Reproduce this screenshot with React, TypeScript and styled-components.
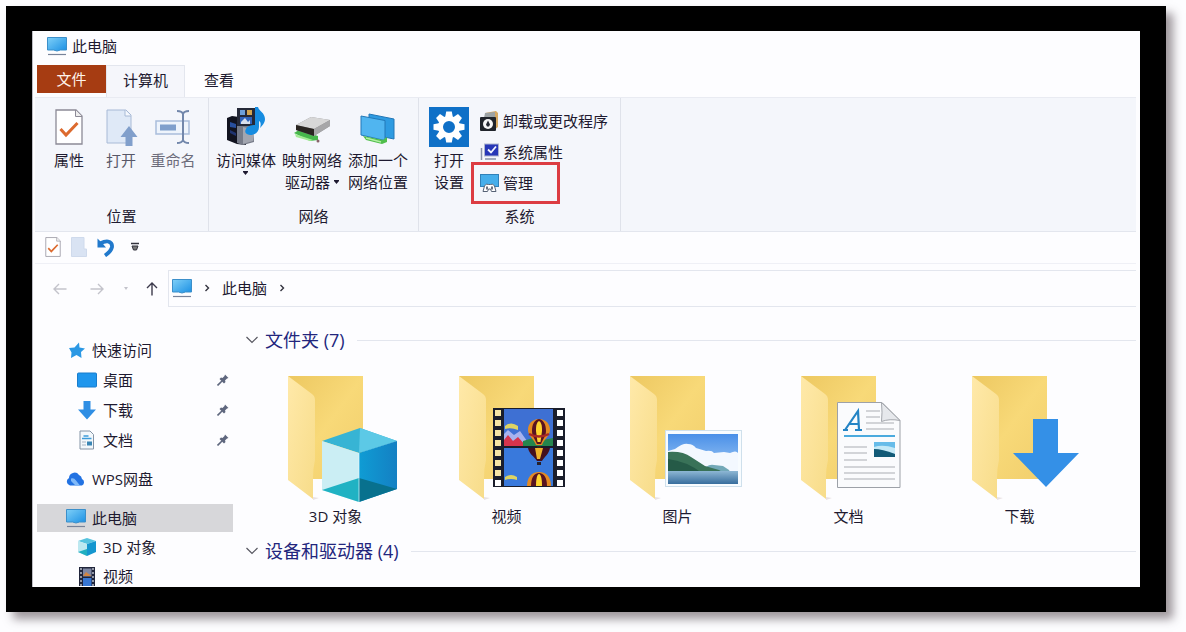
import React from 'react';
import styled, { createGlobalStyle } from 'styled-components';

const ink = '#1e1a30';
const line = '#e3e6ee';

const GlobalStyle = createGlobalStyle`
  *, *::before, *::after { box-sizing: border-box; }
  body {
    margin: 0;
    background: #fdfdff;
    color: ${ink};
    font-family: "Open Sans", "Noto Sans CJK SC", sans-serif;
    font-size: 15px;
    line-height: 22px;
    overflow: hidden;
  }
  button {
    font: inherit;
    color: inherit;
    background: none;
    border: 0;
    padding: 0;
    cursor: pointer;
    white-space: nowrap;
  }
  svg { display: block; flex: none; }
  h1, h2, ul { margin: 0; padding: 0; list-style: none; font-weight: 400; }
`;

const Page = styled.div`
  height: 100vh;
  padding: 6px 20px 20px 6px;
`;

const Frame = styled.div`
  display: flex;
  height: 100%;
  padding: 25px 26px;
  background: #000;
  box-shadow: 7px 7px 9px rgba(62, 48, 56, 0.5);
`;

const Window = styled.div`
  flex: 1;
  min-width: 0;
  display: flex;
  flex-direction: column;
  overflow: hidden;
  padding: 0 4px 0 2px;
  background: #fdfdff;
  border-left: 1px solid #bdbdc4;
`;

const TitleBar = styled.header`
  display: flex;
  align-items: center;
  gap: 5px;
  height: 34px;
  flex: none;
  padding: 0 12px 4px;
`;

const Title = styled.h1`
  font-size: 15px;
`;

const TabBar = styled.div`
  display: flex;
  align-items: stretch;
  height: 32px;
  flex: none;
  padding-left: 2px;
`;

const FileTab = styled.button`
  width: 69px;
  height: 28px;
  background: #a63c12;
  color: #fff3ea;
`;

const Tab = styled.button<{ $active?: boolean }>`
  width: ${p => (p.$active ? 79 : 68)}px;
  padding-bottom: 4px;
  border: 1px solid ${p => (p.$active ? line : 'transparent')};
  border-bottom: 0;
  background: ${p => (p.$active ? '#f5f6fb' : 'transparent')};
`;

const Ribbon = styled.div`
  display: flex;
  flex: none;
  height: 135px;
  background: #f4f6fb;
  border-top: 1px solid #e9ebf2;
  border-bottom: 1px solid ${line};
`;

const RibbonGroup = styled.section<{ $inset: number; $width: number }>`
  display: flex;
  flex-direction: column;
  justify-content: space-between;
  width: ${p => p.$width}px;
  padding: 9px 0 4px;
  border-right: 1px solid #dfe2ea;
  & > div { padding-left: ${p => p.$inset}px; }
`;

const Tools = styled.div`
  display: flex;
  align-items: flex-start;
`;

const GroupCaption = styled.span`
  text-align: center;
`;

const Tool = styled.button<{ $width: number; $tone?: string }>`
  display: flex;
  flex-direction: column;
  align-items: center;
  gap: 2px;
  width: ${p => p.$width}px;
  color: ${p => p.$tone ?? ink};
`;

const ToolIcon = styled.span`
  display: flex;
  align-items: center;
  justify-content: center;
  height: 40px;
`;

const ToolLabel = styled.span`
  display: flex;
  flex-direction: column;
  align-items: center;
`;

const WithCaret = styled.span`
  display: flex;
  align-items: center;
  gap: 4px;
`;

const CommandList = styled.div`
  display: flex;
  flex-direction: column;
  align-items: flex-start;
  gap: 3px;
  padding-left: 5px;
`;

const Command = styled.button<{ $marked?: boolean }>`
  position: relative;
  display: flex;
  align-items: center;
  gap: 4px;
  height: 28px;
  text-align: left;
  &::after {
    content: "";
    display: ${p => (p.$marked ? 'block' : 'none')};
    position: absolute;
    inset: -7px -27px -7px -9px;
    border: 3px solid #dc3c42;
  }
`;

const QuickBar = styled.div`
  display: flex;
  align-items: center;
  gap: 10px;
  flex: none;
  height: 32px;
  padding: 0 0 2px 10px;
  border-bottom: 1px solid #eff0f6;
  & > :last-child { margin-left: 6px; }
`;

const AddressRow = styled.nav`
  display: flex;
  align-items: center;
  flex: none;
  height: 50px;
  padding: 0 0 1px 18px;
`;

const NavButton = styled.button<{ $gap: number }>`
  margin-right: ${p => p.$gap}px;
`;

const AddressBox = styled.div`
  display: flex;
  align-items: center;
  gap: 12px;
  flex: 1;
  height: 37px;
  padding: 0 0 2px 3px;
  border: 1px solid ${line};
  border-right: 0;
`;

const Content = styled.div`
  display: flex;
  flex: 1;
  min-height: 0;
`;

const Sidebar = styled.nav`
  display: flex;
  flex-direction: column;
  gap: 11px;
  flex: none;
  width: 198px;
  padding: 22px 0 0 2px;
`;

const SideList = styled.ul`
  display: flex;
  flex-direction: column;
  gap: 2px;
  &:last-child { gap: 1px; }
`;

const SideLink = styled.a<{ $nested?: boolean; $selected?: boolean }>`
  display: flex;
  align-items: center;
  gap: 6px;
  height: 28px;
  padding: 0 4px 0 ${p => (p.$nested ? 40 : 29)}px;
  color: inherit;
  text-decoration: none;
  background: ${p => (p.$selected ? '#d7d7da' : 'transparent')};
`;

const SideText = styled.span`
  flex: 1;
  white-space: nowrap;
`;

const Main = styled.main`
  flex: 1;
  min-width: 0;
  padding: 14px 0 0 13px;
`;

const SectionHead = styled.h2`
  display: flex;
  align-items: center;
  gap: 12px;
  font-size: 18px;
  line-height: 24px;
  color: #23267d;
  &::after { content: ""; flex: 1; height: 1px; background: ${line}; }
`;

const Toggle = styled.button`
  display: flex;
  align-items: center;
  gap: 7px;
`;

const FolderGrid = styled.ul`
  display: grid;
  grid-template-columns: repeat(auto-fill, 171px);
  padding: 23px 0 12px 4px;
`;

const FolderLink = styled.a`
  display: flex;
  flex-direction: column;
  align-items: center;
  height: 152px;
  gap: 2px;
  color: inherit;
  text-decoration: none;
`;

const Monitor = () => (
  <svg width="20" height="20" viewBox="0 0 20 20">
    <defs>
      <linearGradient id="screen" x1="0" y1="0" x2="1" y2="1">
        <stop offset="0" stopColor="#7fd0f8" />
        <stop offset="1" stopColor="#1a8fe3" />
      </linearGradient>
    </defs>
    <path d="M0.500 1.500h19v12.500h-6l-3.500 1-3.500-1h-6z" fill="url(#screen)" stroke="#3b8fca" />
    <path d="M1 18.500h18" stroke="#77839a" strokeWidth="1.200" />
  </svg>
);

const PropertiesIcon = ({ w = 28, h = 36 }: { w?: number; h?: number }) => (
  <svg width={w} height={h} viewBox="0 0 28 36">
    <path d="M1 1h20l6 6v28H1z" fill="#fff" stroke="#8c8a96" strokeWidth="1.300" />
    <path d="M20.500 1v6.500H27" fill="#eee" stroke="#8c8a96" />
    <path d="M5.500 20l5.500 6L22.500 14" fill="none" stroke="#dc6a2e" strokeWidth="3" />
  </svg>
);

const OpenIcon = () => (
  <svg width="34" height="38" viewBox="0 0 34 38">
    <path d="M3 2h19l5 5v28H3z" fill="#dfe9f7" stroke="#a8bad6" />
    <path d="M21 2v6h6" fill="#f5f8fd" stroke="#a8bad6" />
    <path d="M25 18l8.500 11H28.500v9h-7v-9H16.500z" fill="#819fcb" />
  </svg>
);

const RenameIcon = () => (
  <svg width="36" height="36" viewBox="0 0 36 36">
    <rect x="1" y="12" width="33" height="13" fill="#eef4fc" stroke="#a9bddb" strokeWidth="1.500" />
    <rect x="5" y="15.500" width="16" height="6" fill="#7f9fcc" />
    <path d="M22 2q5 0 6 3 1-3 6-3M28 4v28M22 34q5 0 6-3 1 3 6 3" fill="none" stroke="#7287ab" strokeWidth="2" />
  </svg>
);

const MediaIcon = () => (
  <svg width="40" height="40" viewBox="0 0 40 40">
    <path d="M1 11l5-2 14 2v27l-9-1-10-4z" fill="#11131f" />
    <path d="M4 15l6 2v4l-6-1z" fill="#284f9d" /><path d="M4 23l6 3v3l-6-3z" fill="#1f3470" />
    <path d="M11 17l16 2 1 16-11 3-6-2z" fill="#767b88" />
    <path d="M17 20l10 2v12l-10 3z" fill="#a2a6b0" />
    <path d="M11 1h18v18H11z" fill="#252938" />
    <path d="M14 3h5v5h-5z" fill="#6d9fd9" /><path d="M21 3h5v5h-5z" fill="#d2a450" />
    <path d="M14 10h12v7H14z" fill="#2f62b9" /><path d="M15 15l4-4 3 4 2-2v4h-9z" fill="#d7dfec" />
    <path d="M29 0h3c1 4 7 6 7 12 0 4-3 7-5 9 1-3 1-6-1-7v6c0 5-4 8-9 8-4 0-6-3-4-6 1-3 5-4 9-4z" fill="#168ce0" />
  </svg>
);

const DriveIcon = () => (
  <svg width="38" height="34" viewBox="0 0 38 34">
    <path d="M1 23l5-3 19 6v4l-8 1z" fill="#46b74b" />
    <path d="M2 24l18 6-3 1-14-4z" fill="#a2eb94" />
    <path d="M3 15L18 7l19 3v6L21 26 3 20z" fill="#8e8e90" />
    <path d="M3 15L18 7l19 3-16 9z" fill="#d7d7d7" />
    <path d="M3 15l18 4v7L3 20z" fill="#292521" />
    <path d="M21 19l16-9v6L21 26z" fill="#a6a6a8" />
    <circle cx="25" cy="31" r="1.500" fill="#89636a" />
  </svg>
);

const NetPlaceIcon = () => (
  <svg width="36" height="36" viewBox="0 0 36 36">
    <path d="M9 5l25 5v20l-25-5z" fill="#2e9be1" stroke="#2277b6" />
    <path d="M1 7l24 4.500v20L1 26z" fill="#50b5f0" stroke="#2379b8" />
    <path d="M3 27l20 4 4-3v5l-5 2-16-4z" fill="#4fbe4b" />
    <path d="M6 29l15 4" stroke="#b2efa3" strokeWidth="1.500" />
  </svg>
);

const SettingsIcon = () => (
  <svg width="40" height="40" viewBox="0 0 40 40">
    <rect width="40" height="40" fill="#0f70c7" />
    <g transform="translate(20 20)" fill="#fff">
      {[0, 45, 90, 135, 180, 225, 270, 315].map(a => (
        <path key={a} d="M-4-9L-2.800-15.500H2.800L4-9z" transform={`rotate(${a})`} />
      ))}
      <circle r="8.500" fill="none" stroke="#fff" strokeWidth="5" />
    </g>
  </svg>
);

const UninstallIcon = () => (
  <svg width="19" height="20" viewBox="0 0 19 20">
    <path d="M5 2l11-2 2 2v14l-4 3z" fill="#d6a862" />
    <path d="M5 2l10-1v6H4z" fill="#9da3a5" />
    <rect x="0" y="6" width="16" height="14" rx="1" fill="#20242b" />
    <circle cx="8" cy="13" r="5" fill="#f7f7f8" />
    <path d="M8 9.500l2 4-1 2H7l-1-2z" fill="#242832" />
  </svg>
);

const SysPropsIcon = () => (
  <svg width="19" height="18" viewBox="0 0 19 18">
    <path d="M1.500 5v12" fill="none" stroke="#8892a8" strokeWidth="1.500" />
    <rect x="4.500" y="1" width="14" height="12" fill="#2737b7" stroke="#aeb5cf" />
    <path d="M8 6.500l3 3 5-6" fill="none" stroke="#f4f6ff" strokeWidth="1.800" />
    <path d="M5 16h11" stroke="#a3abbd" strokeWidth="2" />
  </svg>
);

const ManageIcon = () => (
  <svg width="19" height="20" viewBox="0 0 19 20">
    <rect x="0.500" y="1.500" width="18" height="12" fill="#46aeea" stroke="#3181b8" />
    <path d="M3 18.500l1.500-5.500q1.500-3 4-1.500h2q2.500-1.500 4 1.500L16 18.500h-4.500L10.500 16h-2l-1 2.500z" fill="#fff" stroke="#566275" />
    <path d="M7 13.500v3M12 13.500v3" stroke="#3b4659" strokeWidth="1.500" />
  </svg>
);

const BlankDoc = () => (
  <svg width="16" height="20" viewBox="0 0 16 20">
    <path d="M0.500 0.500h12.500V12H15.500v7.500h-15z" fill="#d9e3f3" stroke="#cfdaec" />
  </svg>
);

const UndoIcon = () => (
  <svg width="18" height="20" viewBox="0 0 18 20">
    <path d="M3 6.500Q8 4 11 4.500 15.500 5.500 15 10 14 14.500 8 18.500" fill="none" stroke="#2179cc" strokeWidth="3.800" />
    <path d="M0.500 1.500v9H9L6 7z" fill="#2179cc" />
  </svg>
);

const MenuCaret = () => (
  <svg width="8" height="10" viewBox="0 0 8 10">
    <path d="M0 1.500h8" stroke="#33333d" strokeWidth="1.500" />
    <path d="M1 4h6L5.500 8h-3z" fill="#777" stroke="#33333d" />
  </svg>
);

const SmallCaret = () => (
  <svg width="5" height="4" viewBox="0 0 5 4"><path d="M0 0h5v1L2.500 4 0 1z" fill={ink} /></svg>
);

const Arrow = ({ angle, color }: { angle: number; color: string }) => (
  <svg width="14" height="14" viewBox="0 0 14 14">
    <path d="M13.500 7H1M6 2L1 7l5 5" fill="none" stroke={color} strokeWidth="1.400" transform={`rotate(${angle} 7 7)`} />
  </svg>
);

const Crumb = () => (
  <svg width="6" height="8" viewBox="0 0 6 8"><path d="M1.500 1l3 3-3 3" fill="none" stroke="#33333f" strokeWidth="1.400" /></svg>
);

const Chevron = () => (
  <svg width="12" height="8" viewBox="0 0 12 8"><path d="M0.500 1L6 6.500 11.500 1" fill="none" stroke="#55555f" strokeWidth="1.200" /></svg>
);

const StarIcon = () => (
  <svg width="20" height="20" viewBox="0 0 20 20">
    <path d="M13 2.500l.5 5 5.500 1-4 3.500.5 6-5-3-5.500 3 .5-5.500-2.500-4.500 5.500-.5z" fill="#2b98e4" />
  </svg>
);

const DesktopIcon = () => (
  <svg width="20" height="16" viewBox="0 0 20 16">
    <rect x="0.500" y="1" width="19" height="14" rx="1" fill="#1f96ed" stroke="#197dcc" />
  </svg>
);

const DownIcon = () => (
  <svg width="20" height="20" viewBox="0 0 20 20"><path d="M6.500 1h7v8.500H19L10 19.500 1 9.500h5.500z" fill="#2f8ee4" /></svg>
);

const DocIcon = () => (
  <svg width="20" height="20" viewBox="0 0 20 20">
    <path d="M3 1h10l3.500 3.500V19H3z" fill="#f3f8fc" stroke="#8594a6" />
    <path d="M5 8.500h9.500M6.500 6h5" stroke="#3d9bd9" strokeWidth="1.500" />
    <path d="M5 12h4M5 15h4" stroke="#a9b5c4" /><rect x="10" y="11.500" width="5" height="4" fill="#3a86b5" />
  </svg>
);

const CloudIcon = () => (
  <svg width="20" height="16" viewBox="0 0 20 16">
    <path d="M4 14.500a4 4 0 0 1-1-7.500 5.500 5.500 0 0 1 10-3 5 5 0 0 1 3 4 3.600 3.600 0 0 1 0 6.500z" fill="#2272e2" />
    <path d="M5 7.500q3-1 5 2l4 5H9.500L5 10z" fill="#80b9f8" />
  </svg>
);

const CubeIcon = () => (
  <svg width="20" height="20" viewBox="0 0 20 20">
    <path d="M1 4l9-3 9 3-9 3z" fill="#56c3df" /><path d="M1 4l9 3v12l-9-4z" fill="#bde8f0" />
    <path d="M19 4l-9 3v12l9-4z" fill="#1496cf" /><path d="M1 15l9-3v7z" fill="#20afc1" />
  </svg>
);

const FilmIcon = () => (
  <svg width="20" height="20" viewBox="0 0 20 20">
    <rect x="2" y="1" width="16" height="19" fill="#20253b" />
    <rect x="6" y="2.500" width="8.500" height="8" fill="#7e87a4" /><rect x="6" y="12" width="8.500" height="8" fill="#3777d4" />
    <path d="M6 10l3-4 5.500 4z" fill="#d28542" />
    <path d="M4 2v18M16 2v18" stroke="#b7bdc9" strokeWidth="1.500" strokeDasharray="2 2" />
  </svg>
);

const PinIcon = () => (
  <svg width="12" height="12" viewBox="0 0 12 12">
    <path d="M8 0.500l3.500 3.500-1.500 .5L8 6.500l.5 1.500-1.500 1.500-4.500-4.500L4 3.500l1.500.5L7.500 2z" fill="#5f677e" />
    <path d="M5 7L.5 11.500" stroke="#5f677e" strokeWidth="1.600" />
  </svg>
);

const Balloon = ({ x, y }: { x: number; y: number }) => (
  <g transform={`translate(${x} ${y})`}>
    <path d="M0 0c7 0 11 5 11 11 0 6-6 9-8 15h-6c-2-6-8-9-8-15C-11 5-7 0 0 0z" fill="#e48a22" />
    <path d="M0 0c5 1 7 6 7 12 0 5-3 8-5 13h-4c-2-5-5-8-5-13 0-6 2-11 7-12z" fill="#5a1421" />
    <path d="M0 2c3 2 3 6 3 10L1.500 23h-3L-3 12c0-4 0-8 3-10z" fill="#ffd52f" />
    <path d="M-10 15q10 5 20 0" stroke="#a82823" strokeWidth="2.500" fill="none" />
    <path d="M-2 27h4v3h-4z" fill="#39201c" />
  </g>
);

const overlays: Record<string, React.ReactNode> = {
  cube: (
    <g>
      <path d="M50 66l38-13 37 13-38 12z" fill="#37b4d4" />
      <path d="M88 53l37 13-38 12z" fill="#5cc9e6" />
      <path d="M50 66l37 12v49L50 115z" fill="#cbeef4" />
      <path d="M125 66L87 78v49l38-13z" fill="url(#cubeSide)" />
      <path d="M50 115l37-12v24z" fill="#20b2c3" />
      <path d="M87 103l38 11-38 13z" fill="#08718e" />
      <path d="M87 78v49" stroke="#e4fbff" strokeWidth="1" opacity=".7" />
    </g>
  ),
  film: (
    <g>
      <rect x="50" y="33" width="72" height="79" fill="#1a1d2b" />
      <rect x="61" y="34" width="49" height="37" fill="#3e70d3" />
      <rect x="61" y="73" width="49" height="38" fill="#3979dc" />
      <path d="M62 51q6-5 13 0v4q-7-3-13-1zM62 102q6-4 12 0v3q-6-2-12 0z" fill="#ddd363" />
      <path d="M61 59l4-4 6 5 6-4 7 10v5H61z" fill="#a7b3ee" />
      <path d="M61 65l4-5 5 6 5-4 8 9H61z" fill="#d6344c" />
      <path d="M80 71V66l10-3 10 2 10-2v8z" fill="#25864d" />
      <Balloon x={96} y={44} />
      <path d="M85 73h22c-1 6-5 8-8 13h-5c-3-5-8-7-9-13z" fill="#45101c" />
      <path d="M92 73h8l-3 11h-3z" fill="#efb42b" />
      <path d="M94 87h4v3h-4z" fill="#27202a" />
      <path d="M84 111c0-8 4-14 12-14s12 6 12 14z" fill="#e48a22" />
      <path d="M88 111c0-8 3-13 8-13s8 5 8 13z" fill="#5a1421" />
      <path d="M93 111c0-7 1-12 3-12s3 5 3 12z" fill="#ffd52f" />
      {[0, 1, 2, 3, 4, 5, 6, 7].map(i => (
        <g key={i}>
          <rect x="52" y={35 + i * 10} width="6" height="6" fill={i < 7 ? '#f5e4a6' : '#fff'} />
          <rect x="114" y={35 + i * 10} width="6" height="6" fill="#fff" />
        </g>
      ))}
    </g>
  ),
  photo: (
    <g>
      <rect x="51.500" y="55.500" width="76" height="56" fill="#f8fcff" stroke="#cfe0ec" />
      <rect x="54" y="59" width="70" height="50" fill="url(#sky)" />
      <path d="M54 76l7-2q8-6 13-5 5 0 8 4l10 3q6-1 8 2l10-1 6 1q6-3 8 0v22H54z" fill="#f3f8ff" />
      <path d="M92 92q4-3 8-2l9 1 6 4 1 2H88z" fill="#72a8b8" />
      <path d="M54 77q15-1 23 5l14 9 14 4 5 3H54z" fill="#397258" />
      <path d="M54 84q18 2 34 14H54z" fill="#255a47" />
      <rect x="54" y="96" width="70" height="13" fill="url(#lake)" />
    </g>
  ),
  document: (
    <g transform="translate(6 -1)">
      <path d="M46.500 28.500H91l18 18v67H46.500z" fill="#fafbfd" stroke="#9da1a8" />
      <path d="M90.500 28.500q1 10 0 19 8-3 18.500-1z" fill="#e6e8ec" stroke="#a4a7ad" />
      <path d="M54 56L67 37l1 19M58 50h9M52 56h5M64 56h7" fill="none" stroke="#2484c5" strokeWidth="2.200" />
      <path d="M75 37h14M75 43h14M75 49h28M75 55h28M53 73h23M53 79h23M53 86h23M53 93h51M53 99h51M53 105h51" stroke="#c5c7cb" strokeWidth="1.300" />
      <path d="M53 62h51" stroke="#4aaade" strokeWidth="2" />
      <rect x="83" y="68" width="21" height="15" fill="#67bce9" />
      <path d="M83 73q9-3 21 1v6q-12-3-21-3z" fill="#c4e9f7" />
      <path d="M83 75q8 0 21 5v3H83z" fill="#125a77" />
    </g>
  ),
  download: <path d="M77 44h25v34h21L90 112 57 78h20z" fill="#3490e7" />,
};

const FolderArt = ({ kind }: { kind: string }) => (
  <svg width="128" height="128" viewBox="0 0 128 128">
    <defs>
      <linearGradient id="back" x1="0" y1="0" x2="1" y2="1">
        <stop offset="0" stopColor="#edc861" /><stop offset=".5" stopColor="#f8d978" /><stop offset="1" stopColor="#f1ce6c" />
      </linearGradient>
      <linearGradient id="flap" x1="0" y1="0" x2="1" y2="1">
        <stop offset="0" stopColor="#ffe9a9" /><stop offset="1" stopColor="#f7dc89" />
      </linearGradient>
      <linearGradient id="cubeSide"><stop offset="0" stopColor="#0f9cd4" /><stop offset="1" stopColor="#1480c3" /></linearGradient>
      <linearGradient id="sky" x1="0" y1="0" x2="0" y2="1"><stop offset="0" stopColor="#4a90e8" /><stop offset="1" stopColor="#bddcf9" /></linearGradient>
      <linearGradient id="lake" x1="0" y1="0" x2="0" y2="1"><stop offset="0" stopColor="#8db7d4" /><stop offset="1" stopColor="#386d9d" /></linearGradient>
    </defs>
    <path d="M16 1h75v103H35z" fill="url(#back)" />
    <path d="M41 122l6 1-6 2z" fill="#e9e2e4" />
    <path d="M16 1l24 18q3 2 3 6v60q-2 8-2 18v21L16 105z" fill="url(#flap)" />
    {overlays[kind]}
  </svg>
);

const folders = [
  { name: '3D 对象', kind: 'cube' },
  { name: '视频', kind: 'film' },
  { name: '图片', kind: 'photo' },
  { name: '文档', kind: 'document' },
  { name: '下载', kind: 'download' },
];

interface SideItem { name: string; icon: React.ReactNode; nested?: boolean; pinned?: boolean; selected?: boolean }

const sideLists: SideItem[][] = [
  [
    { name: '快速访问', icon: <StarIcon /> },
    { name: '桌面', icon: <DesktopIcon />, nested: true, pinned: true },
    { name: '下载', icon: <DownIcon />, nested: true, pinned: true },
    { name: '文档', icon: <DocIcon />, nested: true, pinned: true },
  ],
  [{ name: 'WPS网盘', icon: <CloudIcon /> }],
  [
    { name: '此电脑', icon: <Monitor />, selected: true },
    { name: '3D 对象', icon: <CubeIcon />, nested: true },
    { name: '视频', icon: <FilmIcon />, nested: true },
  ],
];

export default function App() {
  return (
    <Page>
      <GlobalStyle />
      <Frame>
        <Window>
          <TitleBar><Monitor /><Title>此电脑</Title></TitleBar>
          <TabBar>
            <FileTab>文件</FileTab>
            <Tab $active>计算机</Tab>
            <Tab>查看</Tab>
          </TabBar>
          <Ribbon>
            <RibbonGroup $inset={8} $width={174}>
              <Tools>
                <Tool $width={52}><ToolIcon><PropertiesIcon /></ToolIcon><ToolLabel>属性</ToolLabel></Tool>
                <Tool $width={52} $tone="#585868"><ToolIcon><OpenIcon /></ToolIcon><ToolLabel>打开</ToolLabel></Tool>
                <Tool $width={52} $tone="#6c6c7a"><ToolIcon><RenameIcon /></ToolIcon><ToolLabel>重命名</ToolLabel></Tool>
              </Tools>
              <GroupCaption>位置</GroupCaption>
            </RibbonGroup>
            <RibbonGroup $inset={4} $width={210}>
              <Tools>
                <Tool $width={66}><ToolIcon><MediaIcon /></ToolIcon><ToolLabel>访问媒体<SmallCaret /></ToolLabel></Tool>
                <Tool $width={66}>
                  <ToolIcon><DriveIcon /></ToolIcon>
                  <ToolLabel><span>映射网络</span><WithCaret>驱动器<SmallCaret /></WithCaret></ToolLabel>
                </Tool>
                <Tool $width={66}>
                  <ToolIcon><NetPlaceIcon /></ToolIcon>
                  <ToolLabel><span>添加一个</span><span>网络位置</span></ToolLabel>
                </Tool>
              </Tools>
              <GroupCaption>网络</GroupCaption>
            </RibbonGroup>
            <RibbonGroup $inset={4} $width={202}>
              <Tools>
                <Tool $width={52}>
                  <ToolIcon><SettingsIcon /></ToolIcon>
                  <ToolLabel><span>打开</span><span>设置</span></ToolLabel>
                </Tool>
                <CommandList>
                  <Command><UninstallIcon />卸载或更改程序</Command>
                  <Command><SysPropsIcon />系统属性</Command>
                  <Command $marked><ManageIcon />管理</Command>
                </CommandList>
              </Tools>
              <GroupCaption>系统</GroupCaption>
            </RibbonGroup>
          </Ribbon>
          <QuickBar>
            <button aria-label="属性"><PropertiesIcon w={16} h={20} /></button>
            <button aria-label="新建文件夹"><BlankDoc /></button>
            <button aria-label="撤消"><UndoIcon /></button>
            <button aria-label="自定义快速访问工具栏"><MenuCaret /></button>
          </QuickBar>
          <AddressRow>
            <NavButton $gap={23} aria-label="后退"><Arrow angle={0} color="#c3c3cb" /></NavButton>
            <NavButton $gap={20} aria-label="前进"><Arrow angle={180} color="#c3c3cb" /></NavButton>
            <NavButton $gap={17} aria-label="最近浏览的位置">
              <svg width="4" height="3" viewBox="0 0 4 3"><path d="M0 0h4L2 3z" fill="#c3c3cb" /></svg>
            </NavButton>
            <NavButton $gap={9} aria-label="上移"><Arrow angle={90} color="#3c3a4c" /></NavButton>
            <AddressBox>
              <Monitor /><Crumb />
              <button>此电脑</button>
              <Crumb />
            </AddressBox>
          </AddressRow>
          <Content>
            <Sidebar>
              {sideLists.map((list, i) => (
                <SideList key={i}>
                  {list.map(item => (
                    <li key={item.name}>
                      <SideLink href="#" $nested={item.nested} $selected={item.selected}>
                        {item.icon}<SideText>{item.name}</SideText>{item.pinned && <PinIcon />}
                      </SideLink>
                    </li>
                  ))}
                </SideList>
              ))}
            </Sidebar>
            <Main>
              <SectionHead><Toggle><Chevron />文件夹 (7)</Toggle></SectionHead>
              <FolderGrid>
                {folders.map(f => (
                  <li key={f.name}>
                    <FolderLink href="#"><FolderArt kind={f.kind} />{f.name}</FolderLink>
                  </li>
                ))}
              </FolderGrid>
              <SectionHead><Toggle><Chevron />设备和驱动器 (4)</Toggle></SectionHead>
            </Main>
          </Content>
        </Window>
      </Frame>
    </Page>
  );
}
